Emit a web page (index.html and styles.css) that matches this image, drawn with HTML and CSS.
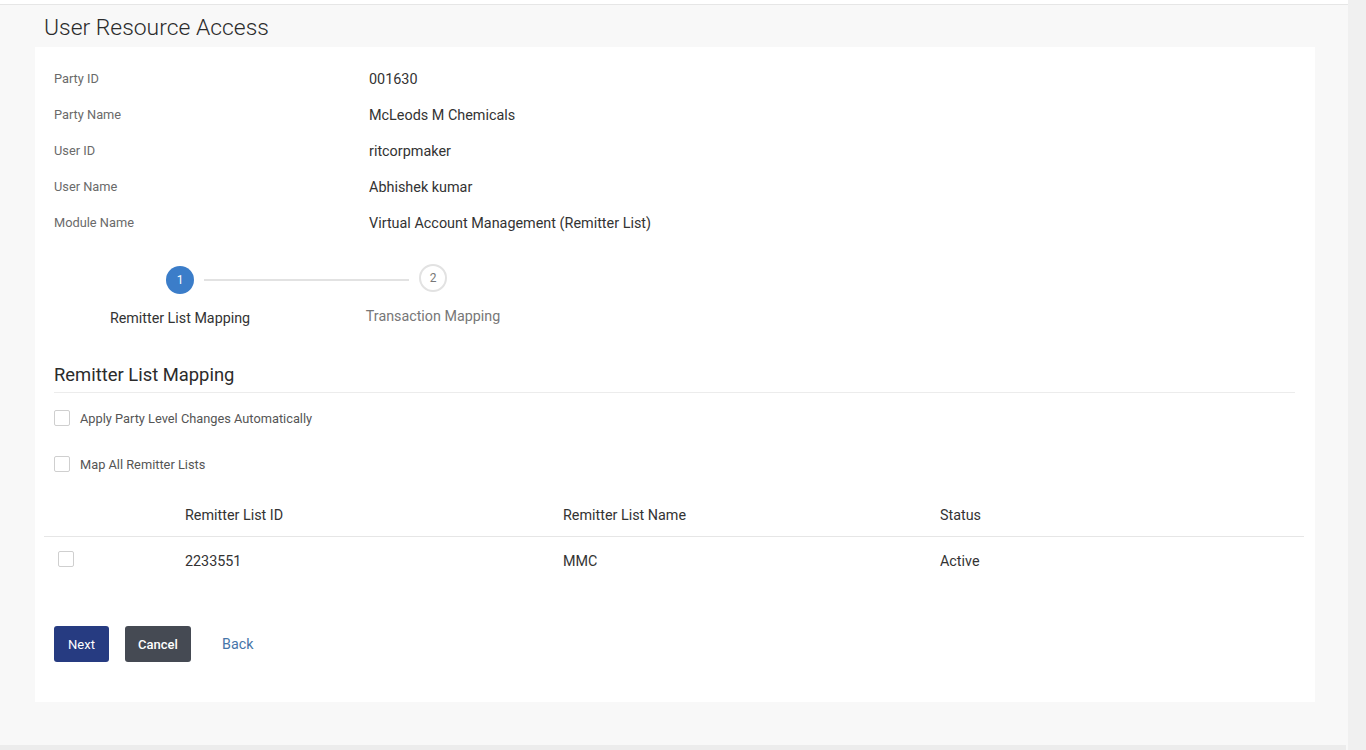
FILE: index.html
```html
<!DOCTYPE html>
<html lang="en">
<head>
<meta charset="utf-8">
<title>User Resource Access</title>
<link rel="stylesheet" href="styles.css">
</head>
<body>
<div class="page">
  <main class="main">
    <div class="topbar"></div>
    <header class="page-header">
      <h1 class="page-title">User Resource Access</h1>
    </header>
    <section class="card">
      <dl class="details">
        <div class="detail-row"><dt>Party ID</dt><dd>001630</dd></div>
        <div class="detail-row"><dt>Party Name</dt><dd>McLeods M Chemicals</dd></div>
        <div class="detail-row"><dt>User ID</dt><dd>ritcorpmaker</dd></div>
        <div class="detail-row"><dt>User Name</dt><dd>Abhishek kumar</dd></div>
        <div class="detail-row"><dt>Module Name</dt><dd>Virtual Account Management (Remitter List)</dd></div>
      </dl>

      <ol class="stepper">
        <li class="step step-active step-connected">
          <span class="step-circle">1</span>
          <span class="step-label">Remitter List Mapping</span>
        </li>
        <li class="step step-pending">
          <span class="step-circle">2</span>
          <span class="step-label">Transaction Mapping</span>
        </li>
      </ol>

      <h2 class="section-title">Remitter List Mapping</h2>

      <div class="options">
        <label class="option"><span class="checkbox"></span><span class="option-text">Apply Party Level Changes Automatically</span></label>
        <label class="option"><span class="checkbox"></span><span class="option-text">Map All Remitter Lists</span></label>
      </div>

      <div class="table">
        <div class="table-row table-head">
          <div class="cell cell-check"></div>
          <div class="cell">Remitter List ID</div>
          <div class="cell">Remitter List Name</div>
          <div class="cell">Status</div>
        </div>
        <div class="table-row table-body-row">
          <div class="cell cell-check"><span class="checkbox checkbox-row"></span></div>
          <div class="cell">2233551</div>
          <div class="cell">MMC</div>
          <div class="cell">Active</div>
        </div>
      </div>

      <div class="actions">
        <button class="btn btn-primary" type="button">Next</button>
        <button class="btn btn-secondary" type="button">Cancel</button>
        <a class="link-back" href="#">Back</a>
      </div>
    </section>
    <div class="main-fill"></div>
    <div class="bottombar"></div>
  </main>
  <aside class="scroll-strip"></aside>
</div>
</body>
</html>
```

FILE: styles.css
```css
* {
  box-sizing: border-box;
}

html, body {
  margin: 0;
  padding: 0;
}

body {
  font-family: Roboto, "Liberation Sans", Arial, sans-serif;
  color: #333;
  background: #f8f8f8;
}

.page {
  display: flex;
  width: 1366px;
  height: 750px;
  overflow: hidden;
}

.main {
  width: 1348px;
  display: flex;
  flex-direction: column;
  background: #f8f8f8;
}

.scroll-strip {
  width: 18px;
  background: #f0f0f0;
}

.topbar {
  height: 5px;
  background: #ffffff;
  border-bottom: 1px solid #e6e6e6;
}

.page-header {
  height: 42px;
  display: flex;
  align-items: center;
  padding-left: 44px;
}

.page-title {
  margin: 0;
  font-size: 22.9px;
  font-weight: 300;
  color: #2b2b2b;
  line-height: 26px;
  position: relative;
  top: 2px;
}

.card {
  margin-left: 35px;
  width: 1280px;
  height: 655px;
  background: #ffffff;
  padding: 13px 20px 0 19px;
}

.details {
  margin: 0;
}

.detail-row {
  display: flex;
  height: 36px;
  align-items: center;
}

.detail-row dt {
  width: 315px;
  font-size: 12.8px;
  color: #6a6a6a;
}

.detail-row dd {
  margin: 0;
  font-size: 14.4px;
  color: #333;
  position: relative;
  top: 1px;
}

.stepper {
  list-style: none;
  margin: 0;
  padding: 26px 0 0 0;
  display: flex;
}

.step {
  width: 252px;
  display: flex;
  flex-direction: column;
  align-items: center;
  position: relative;
}

.step + .step {
  margin-left: 1px;
}

.step-circle {
  width: 28px;
  height: 28px;
  border-radius: 50%;
  display: flex;
  align-items: center;
  justify-content: center;
  font-size: 12px;
}

.step-active .step-circle {
  background: #3b7dc9;
  color: #ffffff;
}

.step-pending .step-circle {
  background: #ffffff;
  border: 2px solid #e2e2e2;
  color: #777;
  margin-top: -2px;
}

.step-connected::after {
  content: "";
  position: absolute;
  top: 13px;
  left: calc(50% + 24px);
  width: 205px;
  height: 2px;
  background: #e2e2e2;
}

.step-label {
  margin-top: 14px;
  font-size: 14.3px;
  line-height: 20px;
}

.step-active .step-label {
  color: #333;
}

.step-pending .step-label {
  color: #777;
  margin-top: 14px;
}

.section-title {
  margin: 35px 0 0 0;
  font-size: 18.4px;
  font-weight: 400;
  line-height: 24px;
  color: #2b2b2b;
  padding-bottom: 5px;
  border-bottom: 1px solid #ececec;
}

.options {
  margin-top: 2px;
}

.option {
  display: flex;
  align-items: center;
  height: 46px;
}

.checkbox {
  width: 16px;
  height: 16px;
  border: 1px solid #cfcfcf;
  border-radius: 2px;
  background: #ffffff;
  flex: none;
}

.option-text {
  margin-left: 10px;
  font-size: 12.8px;
  color: #555;
}

.table {
  margin: 8px -9px 0 -10px;
}

.table-row {
  display: grid;
  grid-template-columns: 141px 378px 377px 1fr;
  align-items: center;
}

.table-head {
  height: 42px;
  border-bottom: 1px solid #e6e6e6;
  font-size: 14.35px;
  color: #333;
}

.table-body-row {
  height: 48px;
  font-size: 14.35px;
  color: #333;
}

.cell-check {
  padding-left: 14px;
  display: flex;
}

.checkbox-row {
  position: relative;
  top: -2px;
}

.actions {
  display: flex;
  align-items: center;
  margin-top: 41px;
}

.btn {
  height: 36px;
  border: none;
  border-radius: 3px;
  color: #ffffff;
  font-family: Roboto, "Liberation Sans", Arial, sans-serif;
  font-size: 13px;
  font-weight: 400;
  padding: 0;
  cursor: pointer;
}

.btn-primary {
  width: 55px;
  background: #263b81;
}

.btn-secondary {
  width: 66px;
  margin-left: 16px;
  background: #454a53;
  font-weight: 500;
}

.link-back {
  margin-left: 31px;
  font-size: 14.3px;
  color: #4675a8;
  text-decoration: none;
}

.main-fill {
  flex: 1;
}

.bottombar {
  height: 5px;
  background: #ececec;
  margin-right: 2px;
}
```
